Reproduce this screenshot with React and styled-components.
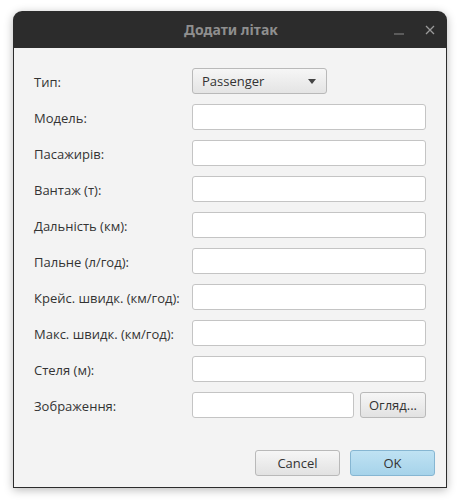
import React from "react";
import styled, { createGlobalStyle } from "styled-components";

const GlobalStyle = createGlobalStyle`
  html, body {
    margin: 0;
    padding: 0;
    background: #ffffff;
    font-family: "Open Sans", "Noto Sans", sans-serif;
  }
`;

const fields = [
  "Модель:",
  "Пасажирів:",
  "Вантаж (т):",
  "Дальність (км):",
  "Пальне (л/год):",
  "Крейс. швидк. (км/год):",
  "Макс. швидк. (км/год):",
  "Стеля (м):"
];

const Page = styled.div`
  padding: 11px 13px 16px 13px;
  width: 434px;
`;

const Window = styled.div`
  width: 434px;
  height: 477px;
  display: flex;
  flex-direction: column;
  border-radius: 9px 9px 0 0;
  box-shadow: 0 2px 10px rgba(0, 0, 0, 0.28);
  box-sizing: border-box;
  overflow: hidden;
`;

const TitleBar = styled.div`
  height: 37px;
  background: #2c2c2c;
  display: flex;
  align-items: center;
  justify-content: center;
  position: relative;
  flex-shrink: 0;
`;

const Title = styled.div`
  color: #8f8f8f;
  font-family: "Noto Sans", "Open Sans", sans-serif;
  font-weight: 700;
  font-size: 14px;
  margin-left: 2px;
`;

const Controls = styled.div`
  position: absolute;
  right: 12px;
  top: 0;
  height: 37px;
  display: flex;
  align-items: center;
  gap: 21px;
`;

const Body = styled.div`
  flex: 1;
  background: #f3f3f3;
  border: 1px solid #2c2c2c;
  border-top: none;
  display: flex;
  flex-direction: column;
  padding: 20px 11px 11px 20px;
`;

const Form = styled.div`
  display: grid;
  grid-template-columns: 158px 234px;
  grid-auto-rows: 26px;
  row-gap: 10px;
  align-items: center;
`;

const Label = styled.div`
  font-size: 13px;
  color: #333333;
  padding-top: 1px;
`;

const Input = styled.div`
  height: 26px;
  box-sizing: border-box;
  background: #ffffff;
  border: 1px solid #c4c4c4;
  border-radius: 3px;
  width: ${(p) => p.$width || "100%"};
`;

const Combo = styled.div`
  width: 135px;
  height: 26px;
  box-sizing: border-box;
  border: 1px solid #b9b9b9;
  border-radius: 3px;
  background: linear-gradient(#f6f6f6, #e4e4e4);
  display: flex;
  align-items: center;
  justify-content: space-between;
  padding: 0 10px 0 9px;
  font-size: 13px;
  color: #333333;
`;

const Arrow = styled.span`
  width: 0;
  height: 0;
  border-left: 4px solid transparent;
  border-right: 4px solid transparent;
  border-top: 5px solid #444444;
`;

const FileRow = styled.div`
  display: flex;
  gap: 6px;
  align-items: center;
`;

const Button = styled.button`
  height: 26px;
  box-sizing: border-box;
  width: ${(p) => p.$width || "85px"};
  border: 1px solid ${(p) => (p.$primary ? "#86b6d2" : "#b9b9b9")};
  border-radius: 3px;
  background: ${(p) =>
    p.$primary
      ? "linear-gradient(#bfe2f3, #a6d3ea)"
      : "linear-gradient(#f6f6f6, #e2e2e2)"};
  font-family: "Open Sans", "Noto Sans", sans-serif;
  font-size: 13px;
  color: #333333;
  padding: 0;
`;

const Footer = styled.div`
  margin-top: auto;
  display: flex;
  justify-content: flex-end;
  gap: 10px;
`;

const App = () => {
  return (
    <Page>
      <GlobalStyle />
      <Window>
        <TitleBar>
          <Title>Додати літак</Title>
          <Controls>
            <svg width="10" height="10" viewBox="0 0 10 10">
              <line x1="0" y1="9" x2="10" y2="9" stroke="#8a8a8a" strokeWidth="1.2" />
            </svg>
            <svg width="10" height="10" viewBox="0 0 10 10">
              <path d="M1 1 L9 9 M9 1 L1 9" stroke="#9a9a9a" strokeWidth="1.3" />
            </svg>
          </Controls>
        </TitleBar>
        <Body>
          <Form>
            <Label>Тип:</Label>
            <Combo>
              Passenger
              <Arrow />
            </Combo>
            {fields.map((f) => (
              <React.Fragment key={f}>
                <Label>{f}</Label>
                <Input />
              </React.Fragment>
            ))}
            <Label>Зображення:</Label>
            <FileRow>
              <Input $width="162px" />
              <Button $width="66px">Огляд...</Button>
            </FileRow>
          </Form>
          <Footer>
            <Button>Cancel</Button>
            <Button $primary>OK</Button>
          </Footer>
        </Body>
      </Window>
    </Page>
  );
};

export default App;
